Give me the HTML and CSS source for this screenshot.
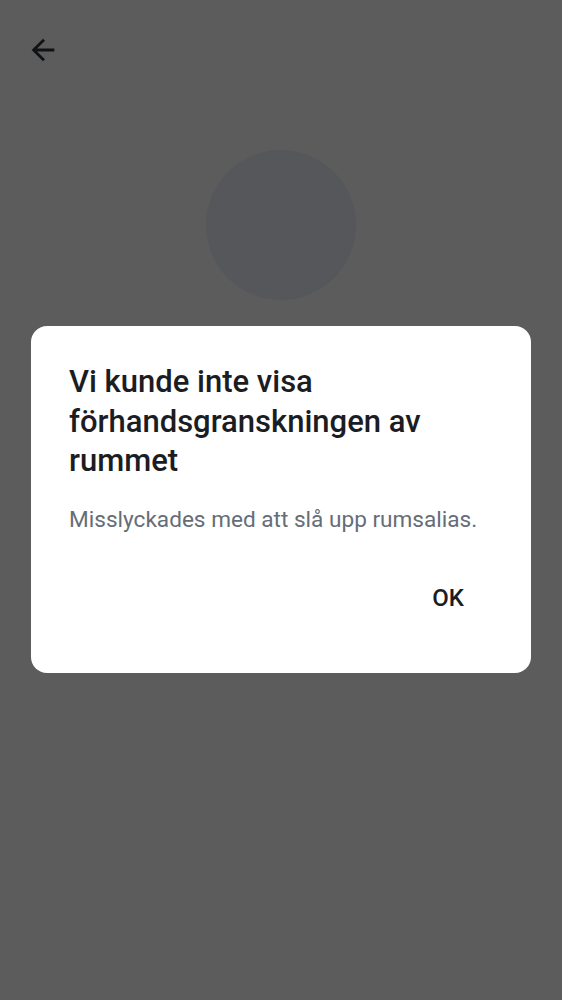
FILE: index.html
```html
<!DOCTYPE html>
<html lang="sv">
<head>
<meta charset="utf-8">
<link rel="stylesheet" href="styles.css">
</head>
<body>
<div class="screen">
  <header class="topbar">
    <button class="back" aria-label="Tillbaka">
      <svg viewBox="0 0 24 24" width="34" height="34"><path d="M20 11H7.83l5.59-5.59L12 4l-8 8 8 8 1.41-1.41L7.83 13H20v-2z" fill="#111214"/></svg>
    </button>
  </header>
  <div class="avatar-wrap"><div class="avatar"></div></div>
  <div class="overlay">
    <div class="dialog">
      <h1 class="title">Vi kunde inte visa förhandsgranskningen av rummet</h1>
      <p class="message">Misslyckades med att slå upp rumsalias.</p>
      <div class="actions"><button class="ok">OK</button></div>
    </div>
  </div>
</div>
</body>
</html>
```
FILE: styles.css
```css
* { box-sizing: border-box; }
html, body { margin: 0; padding: 0; }
body {
  width: 562px;
  height: 1000px;
  background: #5c5c5c;
  font-family: Roboto, "Noto Sans", sans-serif;
  overflow: hidden;
}
.screen {
  position: relative;
  width: 562px;
  height: 1000px;
  background: #5c5c5c;
}
.topbar {
  height: 100px;
  padding: 33px 0 0 26px;
}
.back {
  display: block;
  width: 34px;
  height: 34px;
  padding: 0;
  border: 0;
  background: none;
}
.back svg { display: block; }
.avatar-wrap {
  display: flex;
  justify-content: center;
  padding-top: 50px;
}
.avatar {
  width: 150px;
  height: 150px;
  border-radius: 50%;
  background: #55575a;
}
.overlay {
  position: absolute;
  inset: 0;
  display: flex;
  justify-content: center;
  padding-top: 326px;
}
.dialog {
  width: 500px;
  height: 347px;
  background: #ffffff;
  border-radius: 16px;
  padding: 36px 38px 0 38px;
}
.title {
  margin: 0;
  font-size: 31px;
  line-height: 39.5px;
  font-weight: 500;
  color: #1b1d22;
  padding-right: 10px;
}
.message {
  margin: 24px 0 0 0;
  font-size: 22.6px;
  line-height: 30px;
  color: #656d77;
}
.actions {
  display: flex;
  justify-content: flex-end;
  margin-top: 48px;
}
.ok {
  border: 0;
  background: none;
  padding: 0 29px 0 0;
  font-family: inherit;
  font-size: 24px;
  font-weight: 500;
  line-height: 30px;
  color: #1b1d22;
}
```
